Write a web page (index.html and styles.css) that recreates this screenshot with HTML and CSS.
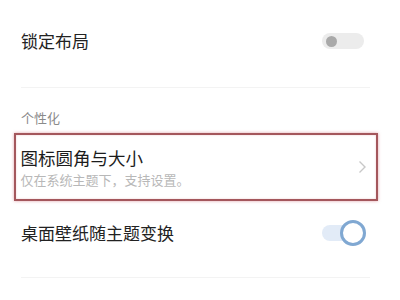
FILE: index.html
```html
<!DOCTYPE html>
<html lang="zh">
<head>
<meta charset="utf-8">
<link rel="stylesheet" href="styles.css">
</head>
<body>
<div class="page">
  <div class="row row-top">
    <span class="label">锁定布局</span>
    <span class="switch off"><span class="knob"></span></span>
  </div>
  <div class="divider"></div>
  <div class="section">个性化</div>
  <div class="highlight">
    <div class="texts">
      <div class="title">图标圆角与大小</div>
      <div class="sub">仅在系统主题下，支持设置。</div>
    </div>
    <svg class="chev" width="9" height="14" viewBox="0 0 9 14"><polyline points="1.5,1.5 7,7 1.5,12.5" fill="none" stroke="#c8c8c8" stroke-width="1.4"/></svg>
  </div>
  <div class="row row-bottom">
    <span class="label">桌面壁纸随主题变换</span>
    <span class="switch on"><span class="knob"></span></span>
  </div>
  <div class="divider bottom"></div>
</div>
</body>
</html>
```
FILE: styles.css
```css
html, body {
  margin: 0;
  padding: 0;
  background: #ffffff;
}
body {
  width: 400px;
  height: 300px;
  overflow: hidden;
  font-family: "Noto Sans CJK SC", "Noto Sans", sans-serif;
}
.page {
  padding: 0 30px 0 21px;
}
.row {
  display: flex;
  align-items: center;
  justify-content: space-between;
}
.row-top {
  height: 82px;
}
.row-bottom {
  height: 64px;
}
.label {
  font-size: 17px;
  line-height: 22px;
  color: #222222;
}
.divider {
  height: 1px;
  background: #f3f3f3;
  margin-top: 5px;
}
.divider.bottom {
  margin-top: 12px;
}
.section {
  height: 22px;
  padding-top: 23px;
  font-size: 13px;
  line-height: 14px;
  color: #8a8a8a;
}
.highlight {
  margin: 0 -8px 0 -7px;
  border: 2.5px solid #a4575c;
  box-shadow: 0 0 3px rgba(200, 90, 100, 0.55), inset 0 0 2px rgba(200, 90, 100, 0.35);
  height: 64px;
  box-sizing: content-box;
  padding: 0 9px 0 4.5px;
  display: flex;
  align-items: center;
  justify-content: space-between;
}
.texts {
  display: flex;
  flex-direction: column;
  gap: 4px;
  padding-top: 1px;
}
.title {
  font-size: 17.5px;
  line-height: 20px;
  color: #1c1c1c;
}
.sub {
  font-size: 13px;
  line-height: 16px;
  color: #b8b8b8;
}
.chev {
  display: block;
}
.switch {
  position: relative;
  display: block;
  width: 42px;
  height: 16px;
  border-radius: 8px;
  margin-right: 6px;
}
.switch.off {
  background: #ececec;
}
.switch.off .knob {
  position: absolute;
  left: 4px;
  top: 2.5px;
  width: 11px;
  height: 11px;
  border-radius: 50%;
  background: #a9a9a9;
}
.switch.on {
  background: #e2ebf7;
}
.switch.on .knob {
  position: absolute;
  left: 18px;
  top: -5px;
  width: 20px;
  height: 20px;
  border: 3px solid #80a8d2;
  border-radius: 50%;
  background: #ffffff;
}
```
